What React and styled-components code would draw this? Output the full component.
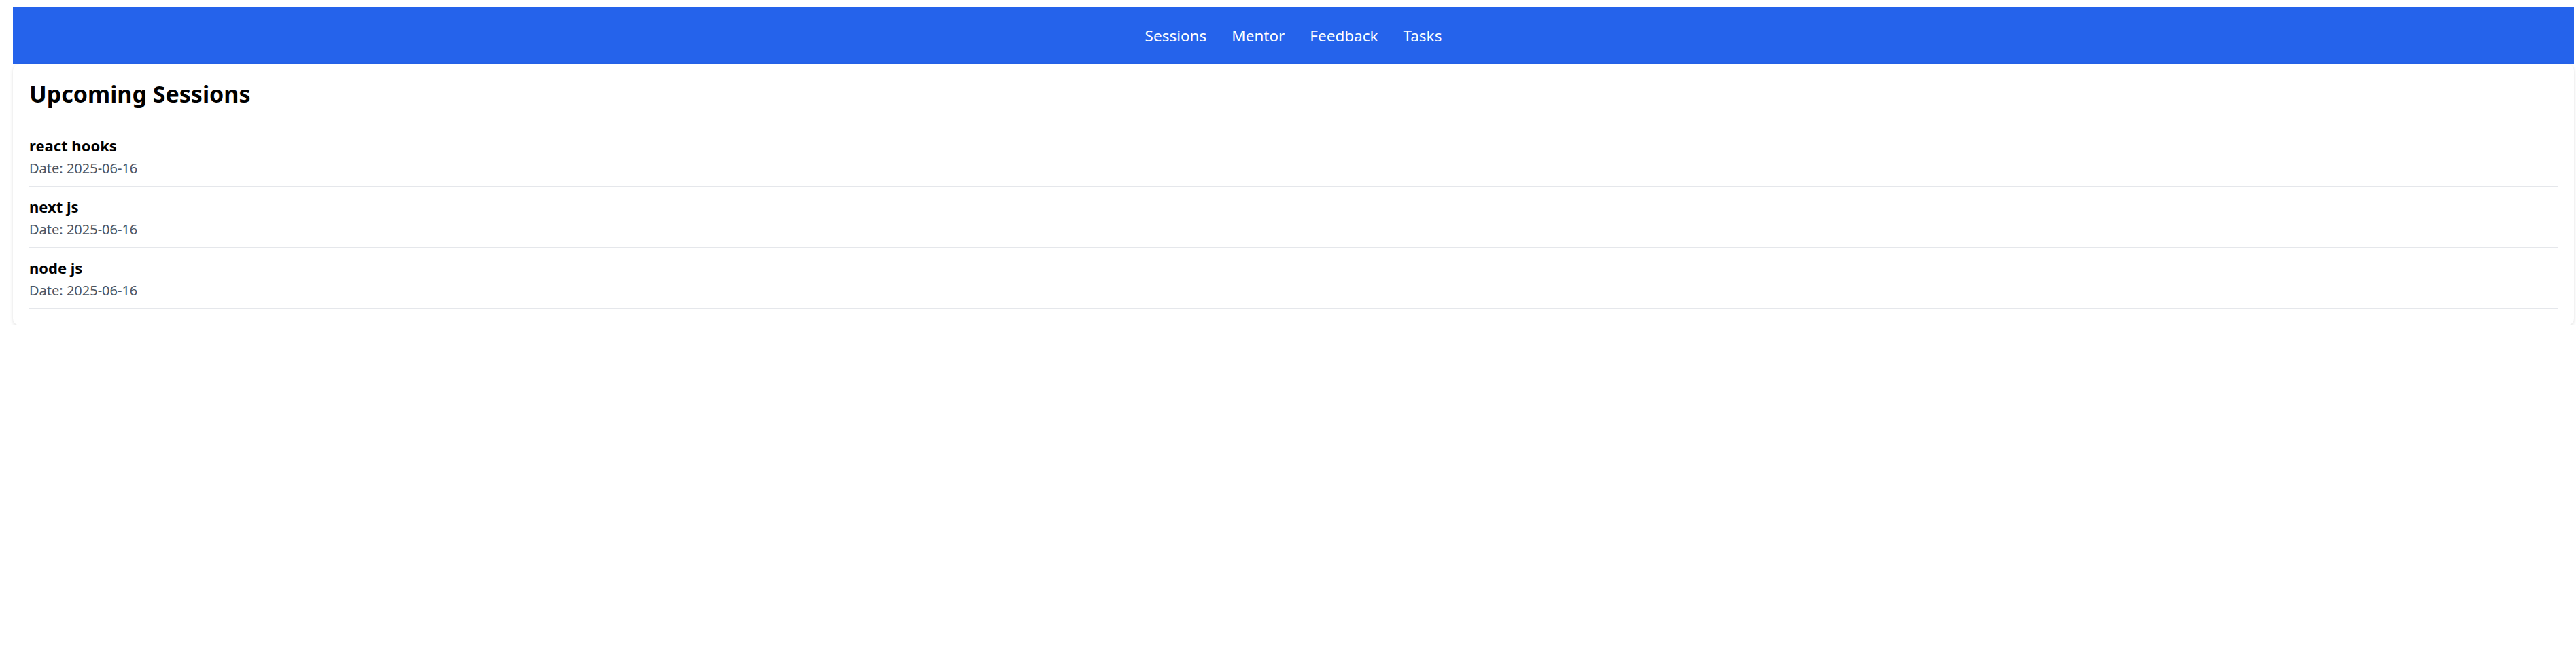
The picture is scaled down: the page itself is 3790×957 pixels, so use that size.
import React from "react";
import styled, { createGlobalStyle } from "styled-components";

/* ================= GLOBAL ================= */

const GlobalStyle = createGlobalStyle`
  * { box-sizing: border-box; }
  body {
    margin: 0;
    background: #ffffff;
    font-family: "Noto Sans", "Open Sans", Arial, sans-serif;
    color: #000000;
  }
`;

/* ================= LAYOUT ================= */

const Page = styled.div`
  padding: 10px 3px 0 19px;
`;

const NavBar = styled.nav`
  height: 84px;
  background: #2563eb;
  display: flex;
  justify-content: center;
  align-items: center;
  gap: 37px;
`;

const NavLink = styled.a`
  color: #ffffff;
  font-size: 22.5px;
  text-decoration: none;
  cursor: pointer;
`;

const Card = styled.section`
  background: #ffffff;
  border-radius: 10px;
  box-shadow: 0 2px 5px rgba(0, 0, 0, 0.12);
  padding: 24px;
`;

const Heading = styled.h2`
  margin: 0 0 26px;
  font-size: 34px;
  line-height: 41px;
  font-weight: 700;
`;

const List = styled.ul`
  list-style: none;
  margin: 0;
  padding: 0;
`;

const Item = styled.li`
  padding: 15px 0 12px;
  border-bottom: 1px solid #e5e7eb;
`;

const Topic = styled.div`
  font-size: 22px;
  line-height: 29px;
  font-weight: 700;
  margin-bottom: 4px;
`;

const DateText = styled.div`
  font-size: 20px;
  line-height: 29px;
  color: #4b5563;
`;

/* ================= DATA ================= */

const links = ["Sessions", "Mentor", "Feedback", "Tasks"];

const sessions = [
  { id: 1, topic: "react hooks", date: "2025-06-16" },
  { id: 2, topic: "next js", date: "2025-06-16" },
  { id: 3, topic: "node js", date: "2025-06-16" },
];

/* ================= COMPONENT ================= */

export default function App() {
  return (
    <>
      <GlobalStyle />
      <Page>
        <NavBar>
          {links.map((l) => (
            <NavLink key={l}>{l}</NavLink>
          ))}
        </NavBar>

        <Card>
          <Heading>Upcoming Sessions</Heading>
          <List>
            {sessions.map((s) => (
              <Item key={s.id}>
                <Topic>{s.topic}</Topic>
                <DateText>Date: {s.date}</DateText>
              </Item>
            ))}
          </List>
        </Card>
      </Page>
    </>
  );
}
